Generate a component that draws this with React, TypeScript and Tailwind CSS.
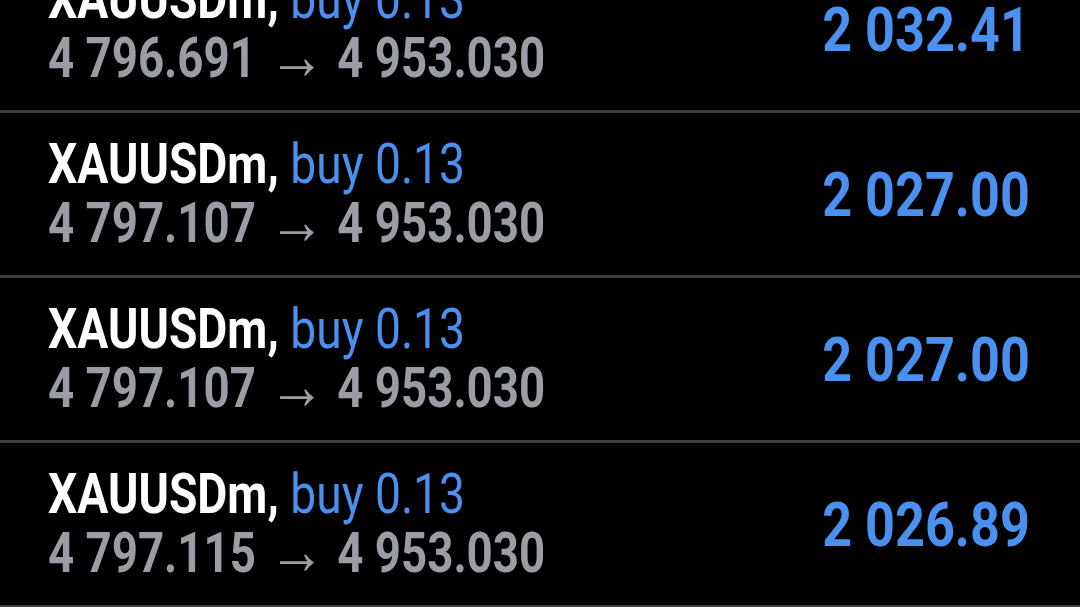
import React from "react";

type Row = { open: string; close: string; profit: string };

const rows: Row[] = [
  { open: "4 796.691", close: "4 953.030", profit: "2 032.41" },
  { open: "4 797.107", close: "4 953.030", profit: "2 027.00" },
  { open: "4 797.107", close: "4 953.030", profit: "2 027.00" },
  { open: "4 797.115", close: "4 953.030", profit: "2 026.89" },
];

function TradeRow({ r, first }: { r: Row; first: boolean }) {
  return (
    <div
      className={`flex h-[165px] shrink-0 items-start justify-between border-b-[3px] border-[#3b3e43] pl-[48px] pr-[50px] ${
        first ? "-mt-[52px]" : ""
      }`}
    >
      <div className="flex flex-col pt-[22px]">
        <div className="h-[59px] origin-left scale-x-[0.84] whitespace-nowrap text-[55px] leading-[59px]">
          <span className="font-bold text-white">XAUUSDm,</span>{" "}
          <span className="font-normal text-[#4a90ef]">buy 0.13</span>
        </div>
        <div className="flex h-[59px] origin-left scale-x-[0.83] items-center whitespace-nowrap text-[55px] font-bold leading-[59px] text-[#9a9ea4]">
          <span>{r.open}</span>
          <span className="ml-[15px] mr-[15px] h-[59px] text-[68px] font-normal leading-[54px]">→</span>
          <span>{r.close}</span>
        </div>
      </div>
      <div className="origin-right scale-x-[0.855] whitespace-nowrap pt-[50px] text-[61px] font-bold leading-[64px] text-[#4a90ef]">
        {r.profit}
      </div>
    </div>
  );
}

export default function App() {
  return (
    <div
      className="flex h-[607px] w-[1080px] flex-col overflow-hidden bg-black"
      style={{ fontFamily: "Roboto, 'Liberation Sans', sans-serif" }}
    >
      {rows.map((r, i) => (
        <TradeRow key={i} r={r} first={i === 0} />
      ))}
    </div>
  );
}
